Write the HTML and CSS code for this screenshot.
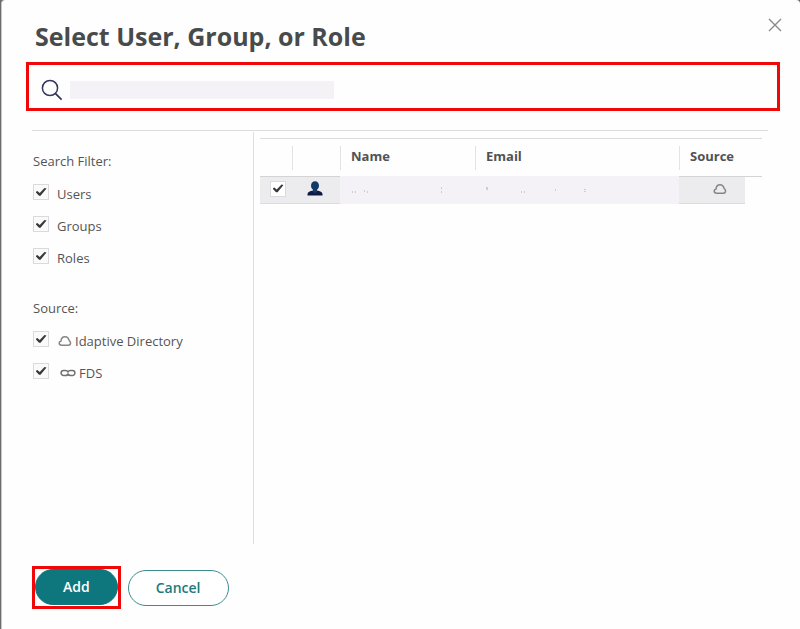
FILE: index.html
```html
<!DOCTYPE html>
<html lang="en">
<head>
<meta charset="utf-8">
<title>Select User, Group, or Role</title>
<link rel="stylesheet" href="styles.css">
</head>
<body>
<svg class="defs" aria-hidden="true">
  <symbol id="cloud" viewBox="0 0 14 12">
    <path d="M3.6 10.3C2 10.3 1.2 9.3 1.2 8.1c0-1.1.7-1.9 1.8-2.1C3.2 3.500 4.800 1.700 7 1.700c2 0 3.400 1.200 3.800 3 .2 1 .9 1.300 1.400 2.100.9 1.600 0 3.500-1.900 3.500z" fill="none" stroke="currentColor" stroke-width="1.500"/>
  </symbol>
</svg>
<main class="dialog">
  <header class="head">
    <h1>Select User, Group, or Role</h1>
    <button class="close" type="button" aria-label="Close">
      <svg width="14" height="14" viewBox="0 0 14 14"><path d="M1 1l12 12M13 1L1 13" stroke="#8a8a8a" stroke-width="1.400" fill="none"/></svg>
    </button>
  </header>

  <div class="search">
    <svg width="22" height="22" viewBox="0 0 22 22" aria-hidden="true"><circle cx="9" cy="9" r="7.600" fill="none" stroke="#34345c" stroke-width="1.500"/><path d="M14.300 14.300l6.300 6.400" stroke="#34345c" stroke-width="1.700"/></svg>
    <input type="search" aria-label="Search">
  </div>

  <div class="content">
    <aside class="filters">
      <fieldset>
        <legend>Search Filter:</legend>
        <label><input type="checkbox" checked><span>Users</span></label>
        <label><input type="checkbox" checked><span>Groups</span></label>
        <label><input type="checkbox" checked><span>Roles</span></label>
      </fieldset>
      <fieldset>
        <legend>Source:</legend>
        <label><input type="checkbox" checked><span><svg class="cloud" width="14" height="12"><use href="#cloud"/></svg>Idaptive Directory</span></label>
        <label><input type="checkbox" checked><span><svg class="link" width="16" height="8" viewBox="0 0 16 8"><g fill="none" stroke="#707070" stroke-width="1.500"><path d="M8.200 3C7.600 2 6.600 1.500 5.400 1.500H3.600a2.500 2.500 0 0 0 0 5h1.800C7 6.500 8 5.800 8.300 4.500"/><path d="M7.800 5C8.400 6 9.400 6.500 10.600 6.500h1.800a2.500 2.500 0 0 0 0-5h-1.800C9 1.500 8 2.200 7.700 3.500"/></g></svg>FDS</span></label>
      </fieldset>
    </aside>

    <section class="results">
      <table>
        <colgroup><col class="c-check"><col class="c-type"><col class="c-name"><col><col class="c-source"><col class="c-end"></colgroup>
        <thead>
          <tr>
            <th></th>
            <th><div></div></th>
            <th class="soft"><div>Name</div></th>
            <th class="soft"><div>Email</div></th>
            <th><div>Source</div></th>
            <th></th>
          </tr>
        </thead>
        <tbody>
          <tr>
            <td><input type="checkbox" checked aria-label="Select user"></td>
            <td><svg class="user" width="16" height="15" viewBox="0 0 16 15"><path d="M0.500 14.500V13c0-2 2.500-3 5.500-3.600h4c3 .6 5.500 1.600 5.500 3.600v1.500z" fill="#101845"/><ellipse cx="8" cy="4.800" rx="4" ry="4.600" fill="#123a68"/><path d="M6 8h4v3l-2 1-2-1z" fill="#123a68"/></svg></td>
            <td class="soft"><svg class="specks" width="130" height="8" aria-hidden="true"><path d="M12 6h1M15 6h1M24 5h1M27 6h1M101 2h1M101 6h1" stroke="#aaa8b0"/></svg></td>
            <td class="soft"><svg class="specks" width="130" height="8" aria-hidden="true"><path d="M12 1v3M46 6h1M49 6h1M80 4h1M110 3v1M110 5v1" stroke="#aaa8b0"/></svg></td>
            <td><svg class="cloud" width="14" height="12"><use href="#cloud"/></svg></td>
            <td class="end"></td>
          </tr>
        </tbody>
      </table>
    </section>
  </div>

  <footer class="actions">
    <div class="highlight"><button class="btn primary" type="button">Add</button></div>
    <button class="btn" type="button">Cancel</button>
  </footer>
</main>
</body>
</html>
```
FILE: styles.css
```css
* { box-sizing: border-box; }

body {
  margin: 0;
  background: #6c6c6e;
  color: #555;
  font: 13px/20px "Open Sans", "Noto Sans", sans-serif;
}

.defs { display: none; }

.dialog {
  display: flex;
  flex-direction: column;
  min-height: 100vh;
  margin-left: 1px;
  padding: 20px 20px 20px 25px;
  border-left: 1px solid #c8c8c8;
  border-radius: 4px 4px 0 0;
  background: #fefefe;
}

.head {
  display: flex;
  justify-content: space-between;
  align-items: flex-start;
  height: 42px;
  padding-left: 8px;
}

h1 {
  margin: 0;
  color: #484b4b;
  font-size: 25px;
  line-height: 32px;
  font-weight: 700;
}

button { font-family: inherit; cursor: pointer; }

.close {
  display: flex;
  margin: -4px -4px 0 0;
  padding: 2px;
  border: 0;
  background: none;
}

.search {
  display: flex;
  align-items: center;
  gap: 7px;
  height: 49px;
  margin-left: -1px;
  padding: 6px 12px 0;
  border: 3px solid #f00808;
}

.search input {
  width: 264px;
  height: 18px;
  padding: 0 8px;
  border: 0;
  background: #f4f2f6;
  font: inherit;
}

.content {
  display: flex;
  flex: 1;
  margin: 19px 12px 22px 5px;
  border-top: 1px solid #dcdcdc;
}

.filters {
  width: 222px;
  margin-top: 1px;
  padding: 19px 0 0 1px;
  border-right: 1px solid #dedee0;
}

fieldset {
  display: flex;
  flex-direction: column;
  gap: 8px;
  margin: 0 0 30px;
  padding: 0;
  border: 0;
}

legend { margin-bottom: 9px; padding: 0; }

label {
  display: flex;
  align-items: center;
  gap: 8px;
  height: 24px;
}

label span {
  display: flex;
  align-items: center;
  padding-top: 3px;
}

.cloud { margin: 0 3px 0 1px; color: #858585; }
.link { margin: 0 3px 0 3px; }

input[type="checkbox"] {
  appearance: none;
  display: grid;
  place-items: center;
  width: 16px;
  height: 16px;
  margin: 0;
  border: 1px solid #dadadc;
  background: #fafafa;
}

input[type="checkbox"]:checked::before {
  content: "";
  width: 11px;
  height: 9px;
  background: #38383a;
  clip-path: polygon(0 50%, 17% 38%, 38% 60%, 82% 5%, 100% 10%, 46% 92%, 32% 92%);
}

.results {
  flex: 1;
  padding: 7px 6px 0;
}

table {
  width: 100%;
  table-layout: fixed;
  border-spacing: 0;
  border-top: 1px solid #dcdcde;
}

.c-check { width: 32px; }
.c-type { width: 48px; }
.c-name { width: 135px; }
.c-source { width: 66px; }
.c-end { width: 17px; }

th {
  height: 38px;
  padding: 0;
  border-bottom: 1px solid #d4d4d6;
  color: #505254;
  font-weight: 700;
  text-align: left;
  white-space: nowrap;
}

th.soft { border-bottom-color: #f4f2f6; }

th div {
  height: 24px;
  padding-left: 10px;
  border-left: 1px solid #e4e4e8;
  line-height: 20px;
}

td {
  height: 27px;
  padding: 0;
  border-bottom: 1px solid #dcdce0;
  background: #ececee;
}

td.soft { border-color: #f4f2f6; background: #f4f2f6; }
td.end { border: 0; background: none; }

td input[type="checkbox"] { margin: 0 0 3px 10px; background: #fff; }
td svg { display: block; }
td .user { margin: 0 auto 3px 15px; }
td .cloud { margin: 0 auto 3px 34px; }

.actions {
  display: flex;
  align-items: center;
  gap: 7px;
  padding-left: 5px;
}

.highlight {
  height: 43px;
  border: 3px solid #f00808;
}

.btn {
  display: block;
  height: 36px;
  padding: 0 27px 1px;
  border: 1px solid #3c8c8e;
  border-radius: 18px;
  background: #fff;
  color: #1c7a7c;
  font-size: 14px;
  font-weight: 600;
}

.primary {
  border-color: #0e767d;
  background: #0e767d;
  color: #fff;
}
```
